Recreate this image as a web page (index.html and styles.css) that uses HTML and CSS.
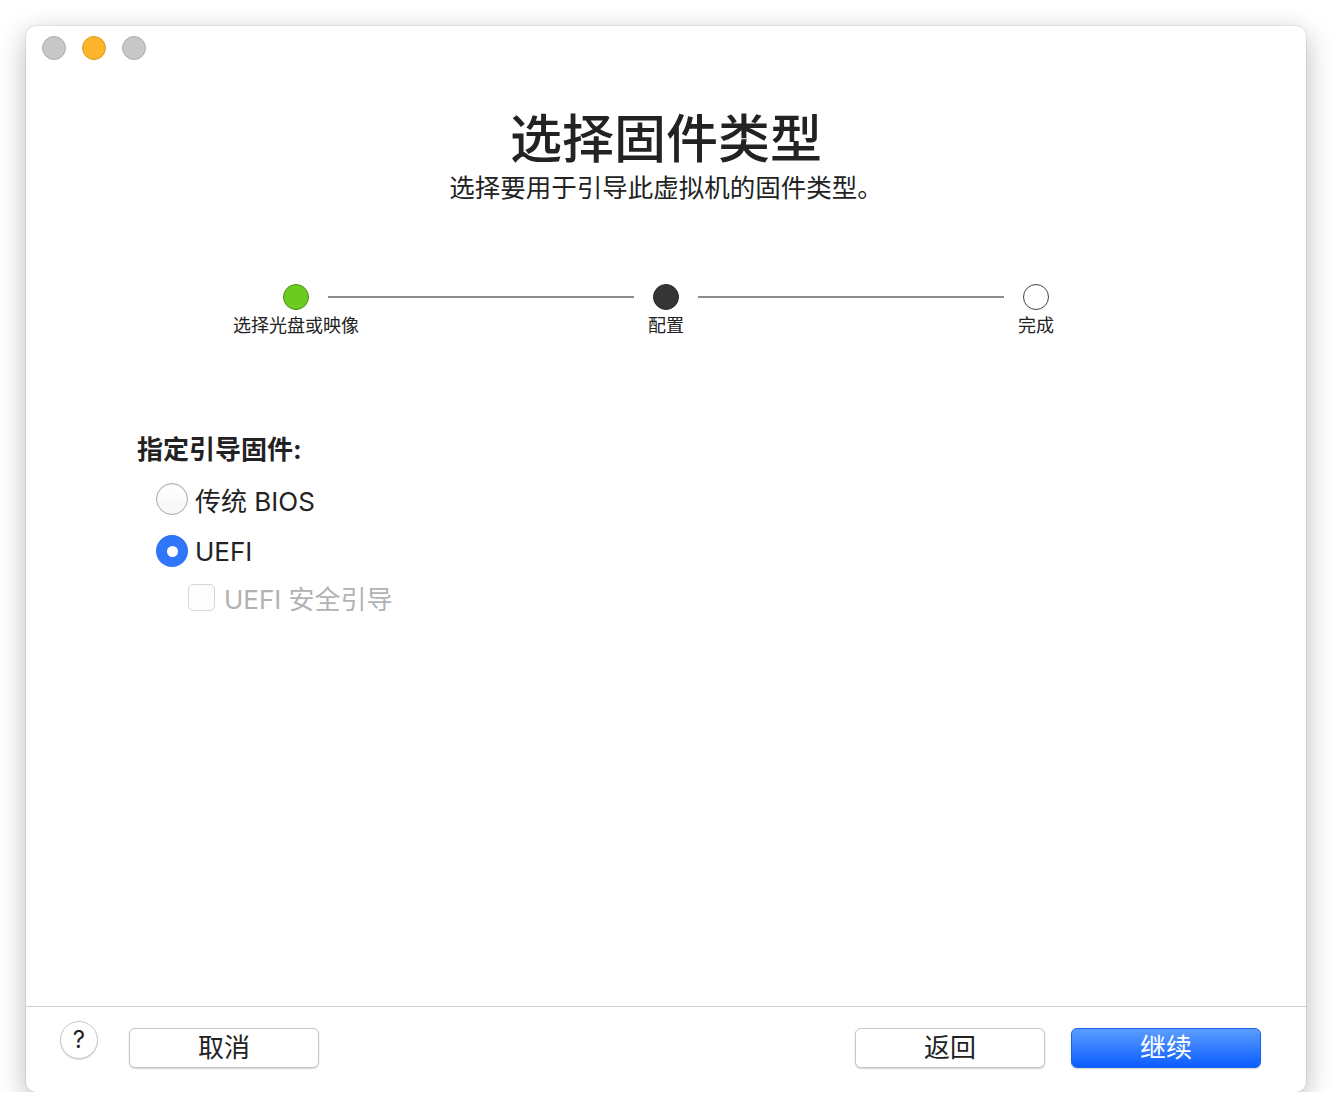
FILE: index.html
```
<!DOCTYPE html>
<html lang="zh-CN">

<head>
    <meta charset="UTF-8">
    <meta name="viewport" content="width=device-width, initial-scale=1.0">
    <title>选择固件类型</title>
    <link rel="stylesheet" href="styles.css">
</head>

<body>
    <div class="window">
        <div class="titlebar">
            <span class="light gray"></span>
            <span class="light orange"></span>
            <span class="light gray"></span>
        </div>

        <div class="content">
            <h1 class="title">选择固件类型</h1>
            <p class="subtitle">选择要用于引导此虚拟机的固件类型。</p>

            <div class="stepper">
                <div class="step">
                    <span class="dot done"></span>
                    <span class="label">选择光盘或映像</span>
                </div>
                <div class="line"></div>
                <div class="step">
                    <span class="dot current"></span>
                    <span class="label">配置</span>
                </div>
                <div class="line"></div>
                <div class="step">
                    <span class="dot"></span>
                    <span class="label">完成</span>
                </div>
            </div>

            <div class="form">
                <div class="form-title">指定引导固件:</div>
                <label class="option">
                    <span class="radio"></span>
                    <span>传统 BIOS</span>
                </label>
                <label class="option">
                    <span class="radio checked"></span>
                    <span>UEFI</span>
                </label>
                <label class="option sub disabled">
                    <span class="checkbox"></span>
                    <span>UEFI 安全引导</span>
                </label>
            </div>
        </div>

        <div class="footer">
            <button class="help">?</button>
            <button class="btn cancel">取消</button>
            <div class="spacer"></div>
            <button class="btn">返回</button>
            <button class="btn primary">继续</button>
        </div>
    </div>
</body>

</html>
```

FILE: styles.css
```
body {
    margin: 0;
    background: #fff;
    font-family: Inter, "Noto Sans CJK SC", sans-serif;
    color: #222;
}

.window {
    margin: 26px 0 0 26px;
    width: 1280px;
    height: 1066px;
    background: #fff;
    border-radius: 10px;
    box-shadow: 0 0 0 1px rgba(0, 0, 0, 0.06), 0 8px 28px rgba(0, 0, 0, 0.28);
    display: flex;
    flex-direction: column;
}

.titlebar {
    height: 44px;
    display: flex;
    gap: 16px;
    padding: 10px 0 0 16px;
    box-sizing: border-box;
}

.light {
    width: 24px;
    height: 24px;
    border-radius: 50%;
    box-sizing: border-box;
}

.light.gray {
    background: #c7c7c7;
    border: 1px solid #adadad;
}

.light.orange {
    background: #fdb52b;
    border: 1px solid #de9b1f;
}

.content {
    flex: 1;
    display: flex;
    flex-direction: column;
}

.title {
    margin: 40px 0 0;
    font-size: 52px;
    line-height: 60px;
    font-weight: 500;
    text-align: center;
}

.subtitle {
    margin: 3px 0 0;
    font-size: 25.5px;
    line-height: 30px;
    text-align: center;
}

.stepper {
    display: flex;
    align-items: flex-start;
    margin: 81px 0 0 257px;
    width: 766px;
}

.step {
    width: 26px;
    display: flex;
    flex-direction: column;
    align-items: center;
}

.dot {
    width: 26px;
    height: 26px;
    border-radius: 50%;
    box-sizing: border-box;
    border: 1.5px solid #444;
    background: #fff;
}

.dot.done {
    background: #6ccb1f;
    border-color: #4a8f1a;
}

.dot.current {
    background: #353535;
    border-color: #2a2a2a;
}

.label {
    margin-top: 4px;
    font-size: 18px;
    line-height: 24px;
    white-space: nowrap;
}

.line {
    flex: 1;
    height: 2px;
    margin: 12px 19px 0;
    background: #8c8c8c;
}

.form {
    margin: 97px 0 0 111px;
    display: flex;
    flex-direction: column;
}

.form-title {
    font-size: 26px;
    line-height: 30px;
    font-weight: 700;
    margin-bottom: 18px;
}

.option {
    display: flex;
    align-items: center;
    gap: 7px;
    margin-left: 19px;
    height: 32px;
    font-size: 26px;
    margin-bottom: 20px;
}

.radio {
    width: 32px;
    height: 32px;
    border-radius: 50%;
    box-sizing: border-box;
    border: 1px solid #a8a8a8;
    background: linear-gradient(#fff, #f6f6f6);
    box-shadow: inset 0 1px 1px rgba(0, 0, 0, 0.08);
}

.radio.checked {
    border: none;
    background: #2f76fb;
    display: flex;
    align-items: center;
    justify-content: center;
}

.radio.checked::after {
    content: "";
    width: 11px;
    height: 11px;
    border-radius: 50%;
    background: #fff;
}

.option.sub {
    margin: -4px 0 0 51px;
    gap: 9px;
    height: 28px;
}

.checkbox {
    width: 27px;
    height: 27px;
    border-radius: 5px;
    box-sizing: border-box;
    border: 1px solid #d6d6d6;
    background: #fdfdfd;
}

.disabled {
    color: #b2b2b2;
}

.footer {
    height: 86px;
    border-top: 1px solid #cfcfcf;
    box-sizing: border-box;
    display: flex;
    align-items: flex-start;
    padding: 0 45px 0 34px;
}

.help {
    width: 38px;
    height: 38px;
    margin-top: 14px;
    border-radius: 50%;
    border: 1px solid #c9c9c9;
    background: #fff;
    box-shadow: 0 1px 1px rgba(0, 0, 0, 0.15);
    font-family: Inter, sans-serif;
    font-size: 24px;
    color: #222;
    padding: 0;
    line-height: 34px;
}

.btn {
    width: 190px;
    height: 40px;
    margin-top: 21px;
    border: 1px solid #c6c6c6;
    border-radius: 6px;
    background: #fff;
    box-shadow: 0 1px 1.5px rgba(0, 0, 0, 0.18);
    font-family: Inter, "Noto Sans CJK SC", sans-serif;
    font-size: 26px;
    line-height: 36px;
    color: #222;
    padding: 0;
}

.cancel {
    margin-left: 31px;
}

.spacer {
    flex: 1;
}

.primary {
    margin-left: 26px;
    border: 1px solid #1a62f0;
    background: linear-gradient(#5c9dff, #0b5dff);
    color: #fff;
}
```
